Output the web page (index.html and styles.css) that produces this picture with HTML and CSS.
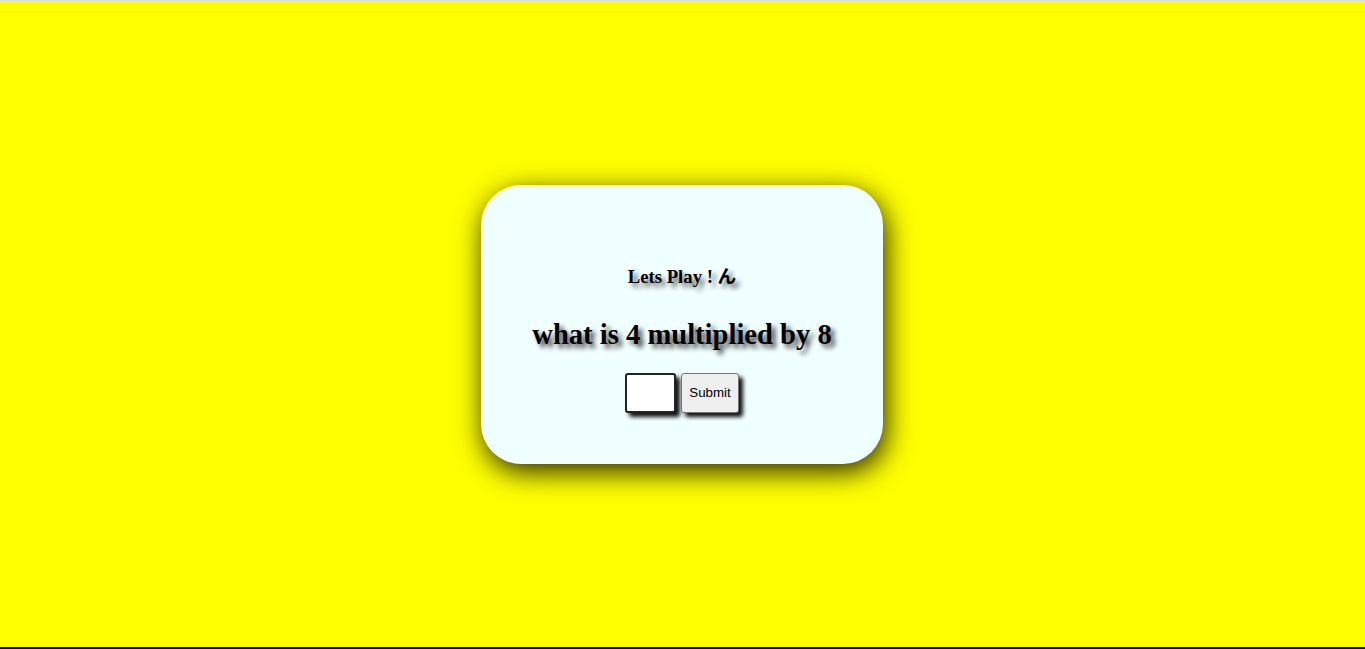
FILE: index.html
```html
<!DOCTYPE html>
<html>
<head>
<meta charset="utf-8">
<link rel="stylesheet" href="styles.css">
</head>
<body>
<main class="stage">
  <section class="card">
    <h3 class="title">Lets Play ! ん</h3>
    <h1 class="question">what is 4 multiplied by 8</h1>
    <form class="answer" onsubmit="return false">
      <input class="answer-input" type="text">
      <button class="answer-btn" type="submit">Submit</button>
    </form>
  </section>
</main>
</body>
</html>
```
FILE: styles.css
```css
html, body {
  margin: 0;
  padding: 0;
  height: 100%;
}
body {
  background: #ffff00;
  font-family: "Liberation Serif", "Noto Sans CJK JP", serif;
  border-top: 1px solid #dcdcdc;
  border-bottom: 2px solid #000;
  box-sizing: border-box;
}
.stage {
  height: 100%;
  display: flex;
  align-items: center;
  justify-content: center;
}
.card {
  width: 402px;
  height: 279px;
  margin-right: 1px;
  box-sizing: border-box;
  background: #f0ffff;
  border-radius: 40px;
  box-shadow: 3px 8px 28px rgba(0,0,0,0.85);
  display: flex;
  flex-direction: column;
  align-items: center;
  padding-top: 81px;
}
.title {
  margin: 0;
  font-size: 18.72px;
  font-weight: bold;
  line-height: 22px;
  text-shadow: 4px 4px 5px #555;
}
.question {
  margin: 30px 0 0 0;
  font-size: 28.6px;
  font-weight: bold;
  line-height: 34px;
  text-shadow: 4px 4px 5px #444;
}
.answer {
  margin-top: 21px;
  display: flex;
  gap: 5px;
}
.answer-input {
  width: 51px;
  height: 40px;
  box-sizing: border-box;
  border: 2px solid #222;
  border-radius: 3px;
  background: #fff;
  padding: 0;
  box-shadow: 4px 4px 4px #111;
}
.answer-btn {
  width: 58px;
  height: 40px;
  box-sizing: border-box;
  border: 1px solid #767676;
  border-radius: 3px;
  background: #efefef;
  font-family: "Liberation Sans", Arial, sans-serif;
  font-size: 13.33px;
  color: #000;
  padding: 0;
  box-shadow: 4px 4px 4px #111;
}
```
